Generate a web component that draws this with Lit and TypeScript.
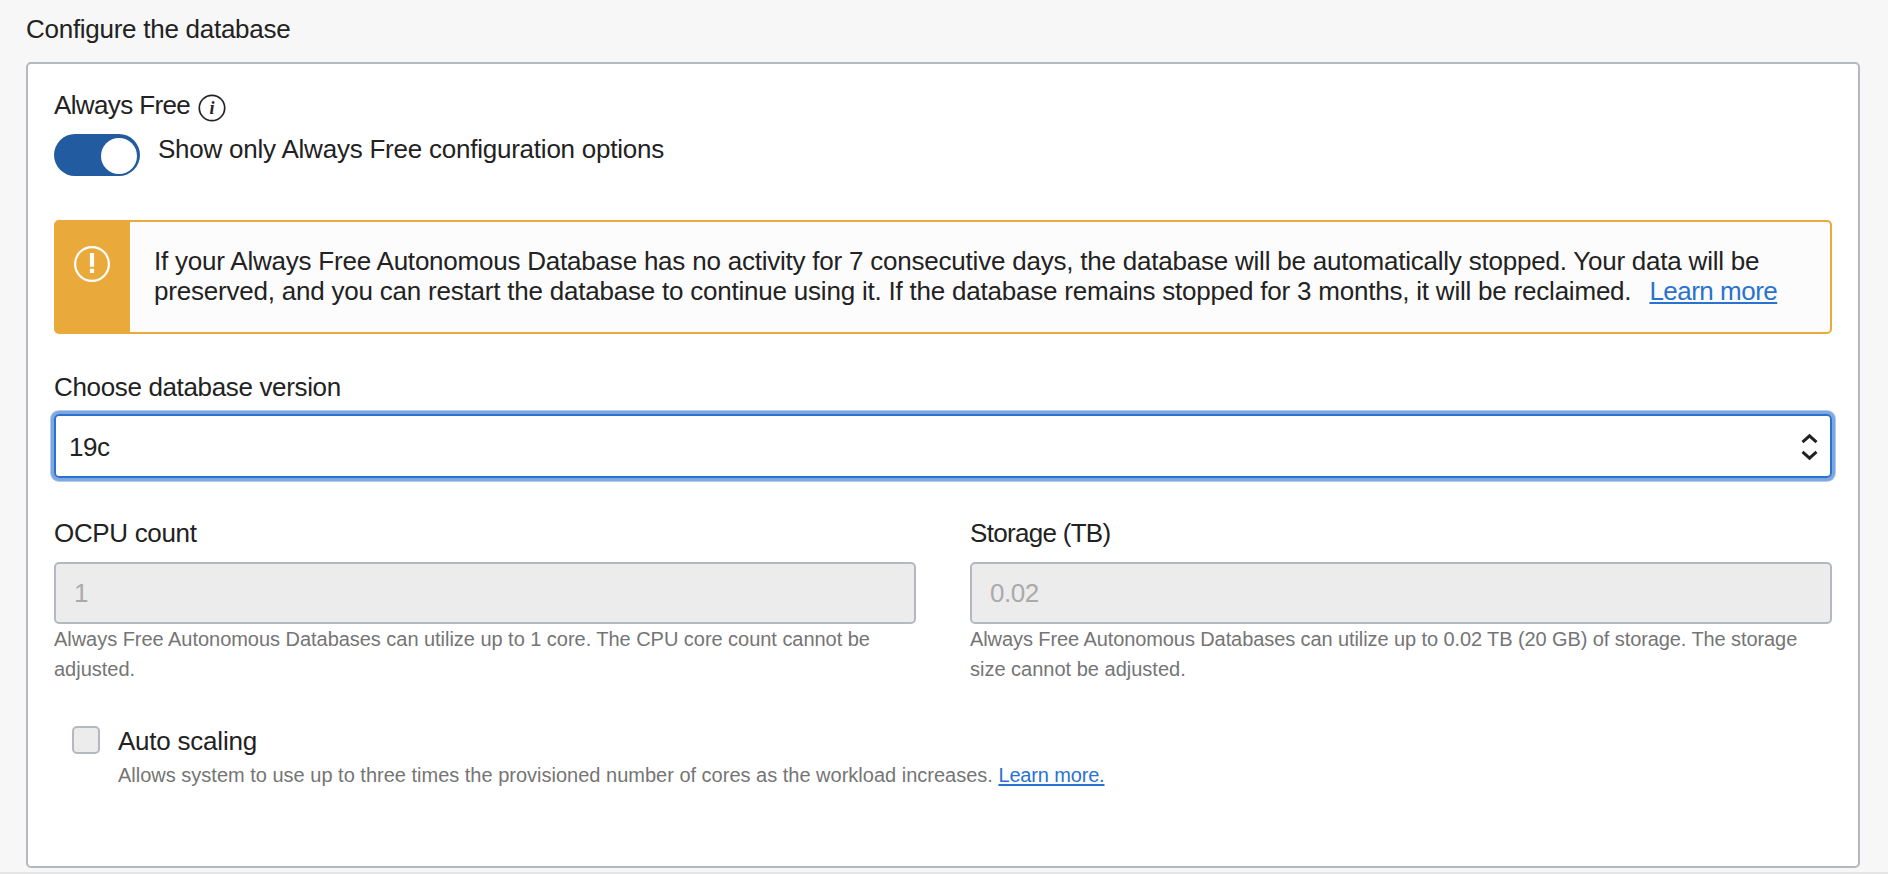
import { LitElement, html, css } from "lit";
import { customElement, property } from "lit/decorators.js";

const textStyles = css`
  * { box-sizing: border-box; }
  .label { font-size: 26px; line-height: 30px; color: #222; white-space: nowrap; }
  .help { font-size: 20px; line-height: 30px; color: #757575; }
  .link {
    color: #2a72cf;
    text-decoration: underline;
    text-decoration-thickness: 2px;
    text-underline-offset: 2px;
    text-decoration-skip-ink: none;
  }
`;

@customElement("resource-field")
export class ResourceField extends LitElement {
  @property() label = "";
  @property() value = "";
  @property({ attribute: false }) lines: string[] = [];

  static styles = [
    textStyles,
    css`
      :host { display: block; }
      .label { letter-spacing: var(--label-spacing, -0.25px); }
      .box {
        height: 62px;
        margin-top: 14px;
        padding: 0 18px;
        display: flex;
        align-items: center;
        border: 2px solid #b4b9c0;
        border-radius: 5px;
        background: #ececec;
        color: #aaa;
        font-size: 26px;
        line-height: 30px;
        letter-spacing: -0.5px;
      }
      .help { white-space: nowrap; letter-spacing: var(--help-spacing, 0); }
      .help + .help { letter-spacing: var(--help-end-spacing, 0); }
    `,
  ];

  render() {
    return html`
      <div class="label">${this.label}</div>
      <div class="box">${this.value}</div>
      ${this.lines.map((line) => html`<div class="help">${line}</div>`)}
    `;
  }
}

@customElement("app-root")
export class AppRoot extends LitElement {
  static styles = [
    textStyles,
    css`
      :host {
        display: block;
        height: 874px;
        overflow: hidden;
        background: #f7f7f7;
        font-family: "Liberation Sans", Arial, sans-serif;
      }
      .page {
        height: 874px;
        padding: 14px 28px 0 26px;
        display: flex;
        flex-direction: column;
        border-bottom: 2px solid #e5e5e5;
      }
      .title { letter-spacing: -0.27px; }
      .panel {
        height: 806px;
        margin-top: 18px;
        padding: 26px 26px 0;
        border: 2px solid #b4b9c0;
        border-radius: 5px;
        background: #fff;
      }
      .heading { display: flex; gap: 8px; height: 30px; }
      .always { letter-spacing: -0.63px; width: 136px; }
      .info { flex: none; width: 28px; height: 28px; margin-top: 4px; }
      .info-letter { font: italic bold 18px "Liberation Serif", serif; fill: #222; }
      .toggle-row { display: flex; gap: 18px; height: 42px; margin-top: 14px; }
      .toggle {
        width: 86px;
        height: 42px;
        padding: 4px 3px 2px;
        display: flex;
        justify-content: flex-end;
        border-radius: 21px;
        background: #225b9f;
      }
      .knob { width: 36px; height: 36px; border-radius: 50%; background: #fff; }
      .toggle-label { letter-spacing: -0.23px; }
      .alert {
        height: 114px;
        margin-top: 44px;
        display: flex;
        border: 2px solid #eaa93b;
        border-radius: 5px;
        background: #fcfcfc;
      }
      .alert-side {
        flex: none;
        width: 74px;
        padding: 24px 0 0 18px;
        background: #eaa93b;
      }
      .alert-text { padding: 24px 0 0 24px; }
      .line-one { letter-spacing: -0.218px; }
      .line-two { letter-spacing: -0.215px; }
      .alert-link { margin-left: 18px; letter-spacing: -0.51px; }
      .version-label { margin-top: 38px; letter-spacing: -0.35px; }
      .select {
        height: 64px;
        margin-top: 12px;
        padding: 0 12px 0 13px;
        display: flex;
        align-items: center;
        justify-content: space-between;
        border: 2px solid #2a72cf;
        border-radius: 5px;
        box-shadow: 0 0 0 3px #7fa7df, 0 0 0 4px #b2cbee;
      }
      .select-value { padding-top: 2px; letter-spacing: -0.5px; }
      .chevrons { margin-top: 2px; }
      .grid { display: grid; grid-template-columns: 1fr 1fr; gap: 54px; margin-top: 40px; }
      .cpu { --label-spacing: -0.34px; --help-spacing: -0.035px; }
      .storage { --label-spacing: -0.7px; --help-spacing: -0.09px; }
      .scaling { display: flex; gap: 18px; margin: 42px 0 0 18px; }
      .checkbox {
        flex: none;
        width: 28px;
        height: 28px;
        border: 2px solid #b4b9c0;
        border-radius: 5px;
        background: #ececec;
      }
      .scaling-label { letter-spacing: -0.23px; }
      .scaling-help { margin-top: 4px; white-space: nowrap; }
      .scaling-link { letter-spacing: -0.16px; }
    `,
  ];

  render() {
    return html`
      <div class="page">
        <div class="label title">Configure the database</div>
        <div class="panel">
          <div class="heading">
            <div class="label always">Always Free</div>
            <svg class="info" viewBox="0 0 28 28">
              <circle cx="14" cy="14" r="12.7" fill="none" stroke="#222" stroke-width="1.7" />
              <text class="info-letter" x="14" y="19.6" text-anchor="middle">i</text>
            </svg>
          </div>
          <div class="toggle-row">
            <div class="toggle"><div class="knob"></div></div>
            <div class="label toggle-label">Show only Always Free configuration options</div>
          </div>

          <div class="alert">
            <div class="alert-side">
              <svg width="36" height="36" viewBox="0 0 36 36">
                <circle cx="18" cy="18" r="16.9" fill="none" stroke="#fff" stroke-width="2.2" />
                <path d="M15.9 7H20.1V20.7H15.9ZM15.9 22.8H20.1V27H15.9Z" fill="#fff" />
              </svg>
            </div>
            <div class="alert-text">
              <div class="label line-one">If your Always Free Autonomous Database has no activity for 7 consecutive days, the database will be automatically stopped. Your data will be</div>
              <div class="label"><span class="line-two">preserved, and you can restart the database to continue using it. If the database remains stopped for 3 months, it will be reclaimed.</span><a class="link alert-link">Learn more</a></div>
            </div>
          </div>

          <div class="label version-label">Choose database version</div>
          <div class="select">
            <div class="label select-value">19c</div>
            <svg class="chevrons" width="17" height="28" viewBox="0 0 17 28" fill="none" stroke="#222" stroke-width="3">
              <path d="M1.5 9.1 8.5 2.8 15.5 9.1M1.5 18.9 8.5 25.2 15.5 18.9" />
            </svg>
          </div>

          <div class="grid">
            <resource-field class="cpu" label="OCPU count" value="1"
              .lines=${["Always Free Autonomous Databases can utilize up to 1 core. The CPU core count cannot be", "adjusted."]}></resource-field>
            <resource-field class="storage" label="Storage (TB)" value="0.02"
              .lines=${["Always Free Autonomous Databases can utilize up to 0.02 TB (20 GB) of storage. The storage", "size cannot be adjusted."]}></resource-field>
          </div>

          <div class="scaling">
            <div class="checkbox"></div>
            <div>
              <div class="label scaling-label">Auto scaling</div>
              <div class="help scaling-help">Allows system to use up to three times the provisioned number of cores as the workload increases. <a class="link scaling-link">Learn more.</a></div>
            </div>
          </div>
        </div>
      </div>
    `;
  }
}
